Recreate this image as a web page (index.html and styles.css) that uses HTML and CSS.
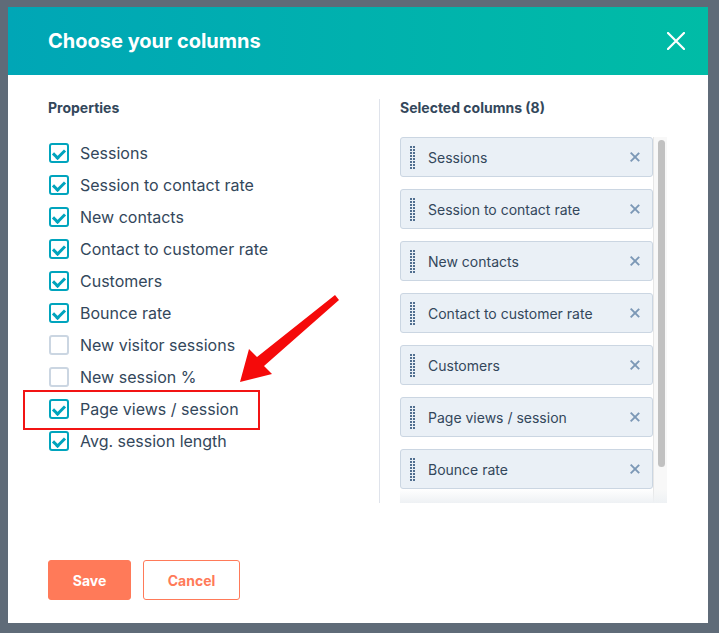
FILE: index.html
```html
<!DOCTYPE html>
<html lang="en">
<head>
    <meta charset="UTF-8">
    <meta name="viewport" content="width=device-width, initial-scale=1.0">
    <title>Choose your columns</title>
    <link rel="stylesheet" href="styles.css">
</head>
<body>
    <div class="modal">
        <div class="modal-header">
            <h2>Choose your columns</h2>
            <button class="close-btn" aria-label="Close">
                <svg width="18" height="18" viewBox="0 0 18 18"><path d="M1 1L17 17M17 1L1 17" stroke="#fff" stroke-width="2.2" stroke-linecap="round"/></svg>
            </button>
        </div>

        <div class="modal-body">
            <div class="col col-left">
                <h3>Properties</h3>
                <ul class="prop-list">
                    <li><span class="box checked"></span>Sessions</li>
                    <li><span class="box checked"></span>Session to contact rate</li>
                    <li><span class="box checked"></span>New contacts</li>
                    <li><span class="box checked"></span>Contact to customer rate</li>
                    <li><span class="box checked"></span>Customers</li>
                    <li><span class="box checked"></span>Bounce rate</li>
                    <li><span class="box"></span>New visitor sessions</li>
                    <li><span class="box"></span>New session %</li>
                    <li><span class="box checked"></span>Page views / session</li>
                    <li><span class="box checked"></span>Avg. session length</li>
                </ul>
            </div>
            <div class="col col-right">
                <h3>Selected columns (8)</h3>
                <div class="selected-wrap">
                    <div class="selected-list">
                        <div class="item"><span class="handle"></span><span class="label">Sessions</span><span class="remove"></span></div>
                        <div class="item"><span class="handle"></span><span class="label">Session to contact rate</span><span class="remove"></span></div>
                        <div class="item"><span class="handle"></span><span class="label">New contacts</span><span class="remove"></span></div>
                        <div class="item"><span class="handle"></span><span class="label">Contact to customer rate</span><span class="remove"></span></div>
                        <div class="item"><span class="handle"></span><span class="label">Customers</span><span class="remove"></span></div>
                        <div class="item"><span class="handle"></span><span class="label">Page views / session</span><span class="remove"></span></div>
                        <div class="item"><span class="handle"></span><span class="label">Bounce rate</span><span class="remove"></span></div>
                    </div>
                    <div class="scrollbar"><div class="thumb"></div></div>
                </div>
            </div>
        </div>

        <div class="modal-footer">
            <button class="btn btn-save">Save</button>
            <button class="btn btn-cancel">Cancel</button>
        </div>
    </div>

    <!-- annotation -->
    <div class="highlight"></div>
    <svg class="arrow" width="719" height="633" viewBox="0 0 719 633">
        <polygon points="240,382 272,374 264,366 339,300 335,295 257,357 249,349" fill="#f50a0a"/>
    </svg>
</body>
</html>
```

FILE: styles.css
```css
body {
    margin: 0;
    padding: 7px 0 0 8px;
    background-color: #5f6b78;
    font-family: Inter, "Noto Sans", sans-serif;
    color: #33475b;
    height: 633px;
    box-sizing: border-box;
    overflow: hidden;
    position: relative;
}
.modal {
    width: 700px;
    height: 616px;
    background: #fff;
    display: flex;
    flex-direction: column;
}
.modal-header {
    height: 68px;
    flex-shrink: 0;
    display: flex;
    align-items: center;
    justify-content: space-between;
    padding: 0 23px 0 40px;
    background: linear-gradient(to right, #00a6b6, #00bca6);
}
.modal-header h2 {
    margin: 0;
    font-size: 20px;
    font-weight: 700;
    color: #fff;
}
.close-btn {
    background: none;
    border: none;
    padding: 0;
    width: 18px;
    height: 18px;
    cursor: pointer;
}
.close-btn svg {
    display: block;
}
.modal-body {
    display: flex;
    padding: 24px 41px 0 40px;
}
.col h3 {
    margin: 0 0 20px;
    font-size: 14px;
    line-height: 18px;
    font-weight: 700;
    color: #33475b;
}
.col-left {
    width: 331px;
    border-right: 1px solid #dfe3eb;
}
.col-right {
    padding-left: 20px;
    width: 267px;
}
.prop-list {
    list-style: none;
    margin: 0;
    padding: 0;
}
.prop-list li {
    display: flex;
    align-items: center;
    height: 32px;
    font-size: 16px;
    font-weight: 400;
}
.box {
    width: 20px;
    height: 20px;
    box-sizing: border-box;
    border: 2px solid #cbd6e2;
    border-radius: 3px;
    margin: 0 11px 0 1px;
    background: #fff;
    position: relative;
}
.box.checked {
    border-color: #00a4bd;
}
.box.checked::after {
    content: "";
    position: absolute;
    left: 4px;
    top: 2px;
    width: 5px;
    height: 9px;
    border: solid #00a4bd;
    border-width: 0 3px 3px 0;
    transform: rotate(45deg);
}
.selected-wrap {
    position: relative;
    display: flex;
    height: 366px;
}
.selected-wrap::after {
    content: "";
    position: absolute;
    left: 0;
    right: 0;
    bottom: 0;
    height: 14px;
    background: linear-gradient(to bottom, rgba(255, 255, 255, 0), #eef1f4);
}
.selected-list {
    width: 253px;
    overflow: hidden;
}
.scrollbar {
    width: 14px;
    box-sizing: border-box;
    padding: 3px 2px 0 4px;
    background: #f8f8f8;
    border-left: 1px solid #e6e6e6;
}
.thumb {
    height: 327px;
    border-radius: 4px;
    background: #c1c1c1;
}
.item {
    display: flex;
    align-items: center;
    height: 40px;
    box-sizing: border-box;
    margin-bottom: 12px;
    background: #eaf0f6;
    border: 1px solid #cbd6e2;
    border-radius: 3px;
    font-size: 14px;
}
.handle {
    width: 5px;
    height: 23px;
    margin: 0 13px 0 9px;
    background-image: conic-gradient(from 90deg at 2px 2px, transparent 0 50%, #516f90 50% 75%, transparent 75%);
    background-size: 3px 3px;
}
.label {
    flex: 1;
}
.remove {
    width: 10px;
    height: 10px;
    margin-right: 12px;
    position: relative;
}
.remove::before,
.remove::after {
    content: "";
    position: absolute;
    left: 4px;
    top: -1px;
    width: 1.6px;
    height: 12px;
    background: #7c98b6;
    transform: rotate(45deg);
}
.remove::after {
    transform: rotate(-45deg);
}
.modal-footer {
    display: flex;
    gap: 12px;
    padding: 57px 40px 0;
}
.btn {
    height: 40px;
    border-radius: 3px;
    font-family: Inter, "Noto Sans", sans-serif;
    font-size: 14px;
    font-weight: 700;
    cursor: pointer;
    box-sizing: border-box;
}
.btn-save {
    width: 83px;
    background: #ff7a59;
    border: 1px solid #ff7a59;
    color: #fff;
}
.btn-cancel {
    width: 97px;
    background: #fff;
    border: 1px solid #ff7a59;
    color: #ff7a59;
}
.highlight {
    position: absolute;
    left: 23px;
    top: 390px;
    width: 233px;
    height: 36px;
    border: 2px solid #f21414;
}
.arrow {
    position: absolute;
    left: 0;
    top: 0;
    pointer-events: none;
}
```
